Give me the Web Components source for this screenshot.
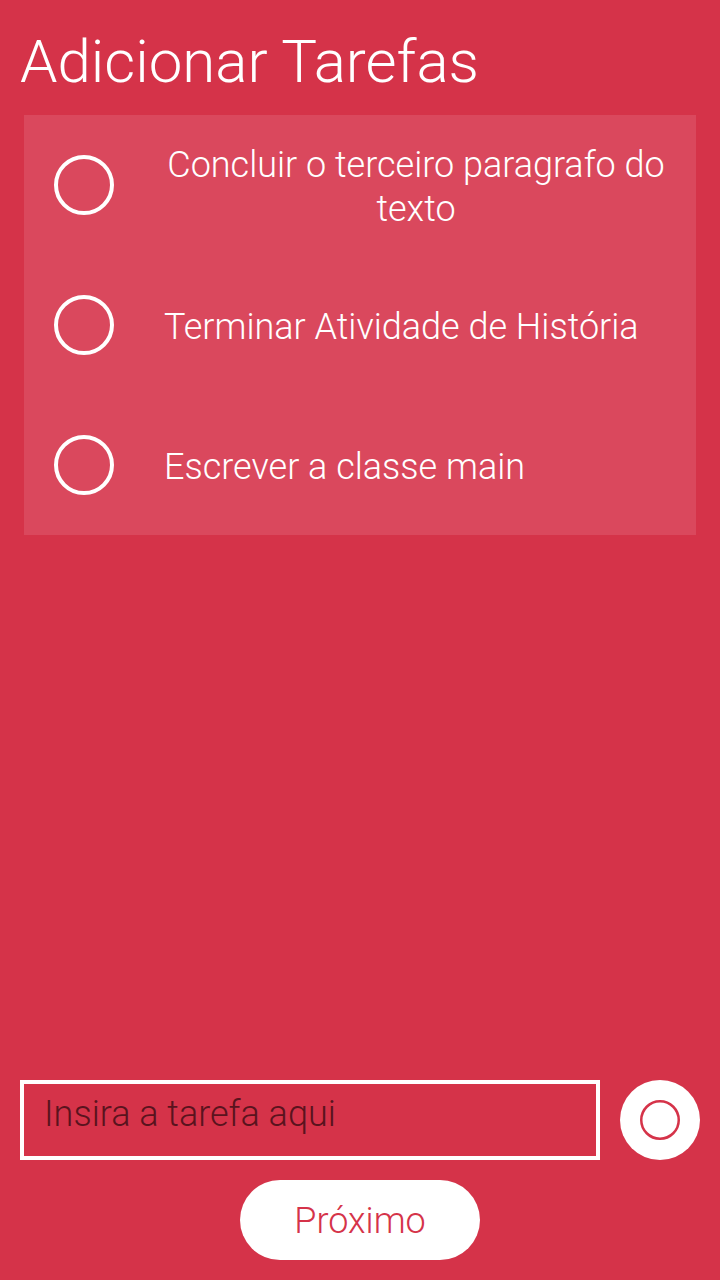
<!DOCTYPE html>
<html lang="pt-BR">
<head>
<meta charset="utf-8">
<meta name="viewport" content="width=device-width, initial-scale=1">
<title>Adicionar Tarefas</title>
<style>
  :root {
    --brand: #d53349;
    --panel: #da485d;
    --ink: #ffffff;
    --hint: #5a131e;
    --text: 36px;
  }
  body {
    margin: 0;
    background: var(--brand);
    color: var(--ink);
    font-family: Roboto, Lato, sans-serif;
    font-weight: 300;
    font-size: var(--text);
    font-variant-ligatures: none;
  }
</style>
</head>
<body>
<task-screen>
  <span slot="title">Adicionar Tarefas</span>
  <task-item>Concluir o terceiro paragrafo do texto</task-item>
  <task-item>Terminar Atividade de História</task-item>
  <task-item>Escrever a classe main</task-item>
  <task-composer slot="footer" hint="Insira a tarefa aqui"></task-composer>
  <pill-button slot="footer">Próximo</pill-button>
</task-screen>

<template id="task-screen">
  <style>
    :host { display: flex; flex-direction: column; min-height: 100vh; box-sizing: border-box; padding: 20px; }
    h1 { margin: 0; font-size: 60px; line-height: 84px; font-weight: inherit; }
    main { flex: 1; padding: 11px 4px 20px; }
    .list { background: var(--panel); }
    footer { display: flex; flex-direction: column; align-items: center; gap: 20px; }
  </style>
  <header><h1><slot name="title"></slot></h1></header>
  <main><div class="list" role="list"><slot></slot></div></main>
  <footer><slot name="footer"></slot></footer>
</template>

<template id="task-item">
  <style>
    :host { display: block; }
    label { display: flex; align-items: center; gap: 50px; min-height: 140px; box-sizing: border-box; padding: 0 28px 0 30px; cursor: pointer; }
    input { appearance: none; flex: none; box-sizing: border-box; width: 60px; height: 60px; margin: 0; border: 4px solid var(--ink); border-radius: 50%; }
    input:checked { background: var(--ink); }
    span { padding-top: 4px; line-height: 44px; text-align: center; }
  </style>
  <label><input type="checkbox"><span><slot></slot></span></label>
</template>

<template id="task-composer">
  <style>
    :host { display: block; align-self: stretch; }
    form { display: flex; gap: 20px; }
    input { flex: 1; min-width: 0; height: 80px; box-sizing: border-box; margin: 0; padding: 0 20px 12px; border: 4px solid var(--ink); border-radius: 0; background: none; color: var(--hint); font: inherit; }
    input::placeholder { color: var(--hint); opacity: 1; }
    button { flex: none; width: 80px; height: 80px; padding: 20px; border: 0; border-radius: 50%; background: var(--ink); color: var(--brand); cursor: pointer; }
    svg { display: block; width: 40px; height: 40px; }
  </style>
  <form>
    <input type="text">
    <button type="button" aria-label="Adicionar">
      <svg viewBox="0 0 40 40" aria-hidden="true"><circle cx="20" cy="20" r="18.75" fill="none" stroke="currentColor" stroke-width="2.5"/></svg>
    </button>
  </form>
</template>

<template id="pill-button">
  <style>
    :host { display: block; }
    button { min-width: 240px; height: 80px; padding: 2px 40px 0; border: 0; border-radius: 40px; background: var(--ink); color: var(--brand); font: inherit; cursor: pointer; display: block; }
  </style>
  <button type="button"><slot></slot></button>
</template>

<script>
  class TemplateElement extends HTMLElement {
    constructor() {
      super();
      const template = document.getElementById(this.localName);
      this.attachShadow({ mode: "open" }).append(template.content.cloneNode(true));
    }
  }
  class TaskScreen extends TemplateElement {}
  class TaskItem extends TemplateElement {
    connectedCallback() { this.setAttribute("role", "listitem"); }
  }
  class TaskComposer extends TemplateElement {
    connectedCallback() {
      const input = this.shadowRoot.querySelector("input");
      input.placeholder = this.getAttribute("hint");
      input.setAttribute("aria-label", input.placeholder);
    }
  }
  class PillButton extends TemplateElement {}
  customElements.define("task-screen", TaskScreen);
  customElements.define("task-item", TaskItem);
  customElements.define("task-composer", TaskComposer);
  customElements.define("pill-button", PillButton);
</script>
</body>
</html>
